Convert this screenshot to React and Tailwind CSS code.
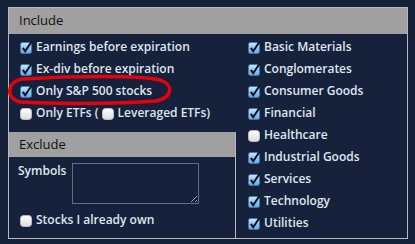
import React from "react";

const Box = ({ checked }) => (
  <svg width="13" height="13" viewBox="0 0 13 13" className="shrink-0">
    <defs>
      <linearGradient id="cbOn" x1="0" y1="0" x2="0" y2="1">
        <stop offset="0" stopColor="#c8e6fb" />
        <stop offset="1" stopColor="#62a9e4" />
      </linearGradient>
      <linearGradient id="cbOff" x1="0" y1="0" x2="0" y2="1">
        <stop offset="0" stopColor="#ffffff" />
        <stop offset="1" stopColor="#dcdcdc" />
      </linearGradient>
    </defs>
    {checked ? (
      <>
        <rect x="0.5" y="1.5" width="11" height="11" rx="2" fill="url(#cbOn)" stroke="#3f78ad" />
        <path d="M2.8 6.8 L5.2 10.2 L11.6 0.6" fill="none" stroke="#0f1626" strokeWidth="2" />
      </>
    ) : (
      <rect x="0.5" y="1.5" width="11" height="11" rx="3" fill="url(#cbOff)" stroke="#bcbcbc" />
    )}
  </svg>
);

const Row = ({ checked, children }) => (
  <div className="flex items-center h-[22px] gap-[3px]">
    <Box checked={checked} />
    <span>{children}</span>
  </div>
);

const sectors = [
  ["Basic Materials", true],
  ["Conglomerates", true],
  ["Consumer Goods", true],
  ["Financial", true],
  ["Healthcare", false],
  ["Industrial Goods", true],
  ["Services", true],
  ["Technology", true],
  ["Utilities", true],
];

export default function App() {
  return (
    <div
      className="relative w-[415px] h-[244px] bg-[#16223b] pt-[7px] pl-[8px] text-[12px] font-semibold text-[#dfe6ef]"
      style={{ fontFamily: '"Open Sans", "DejaVu Sans", sans-serif' }}
    >
      <div className="w-[400px] h-[232px] border border-[#b9b9b9] flex flex-col">
        <div className="h-[26px] bg-[#a0a0a0] text-[#111] font-normal text-[13px] pl-[10px] flex items-center">
          Include
        </div>
        <div className="flex flex-1">
          <div className="w-[227px] flex flex-col">
            <div className="pt-[2px] pl-[11px]">
              <Row checked>Earnings before expiration</Row>
              <Row checked>Ex-div before expiration</Row>
              <Row checked>Only S&amp;P 500 stocks</Row>
              <div className="flex items-center h-[22px] gap-[3px]">
                <Box checked={false} />
                <span>Only ETFs (</span>
                <Box checked={false} />
                <span>Leveraged ETFs)</span>
              </div>
            </div>
            <div className="mt-[8px] flex-1 border-r border-[#b9b9b9] flex flex-col">
              <div className="h-[25px] bg-[#a0a0a0] text-[#111] font-normal text-[13px] pl-[10px] flex items-center">
                Exclude
              </div>
              <div className="flex pl-[9px] pt-[6px] gap-[6px]">
                <span className="leading-[16px]">Symbols</span>
                <textarea className="w-[127px] h-[41px] bg-transparent border border-[#5d6d8c] resize outline-none" />
              </div>
              <div className="pl-[11px] mt-[5px]">
                <Row checked={false}>Stocks I already own</Row>
              </div>
            </div>
          </div>
          <div className="flex-1 pt-[2px] pl-[12px]">
            {sectors.map(([name, on]) => (
              <Row key={name} checked={on}>
                {name}
              </Row>
            ))}
          </div>
        </div>
      </div>
      <svg className="absolute left-0 top-0 pointer-events-none" width="415" height="244">
        <path
          d="M22 79 C70 76 140 75 160 80 C173 84 174 97 156 101 C115 104 50 104 20 102 C6 99 6 82 22 79 Z"
          fill="none"
          stroke="#e8000b"
          strokeWidth="3.5"
        />
      </svg>
    </div>
  );
}
